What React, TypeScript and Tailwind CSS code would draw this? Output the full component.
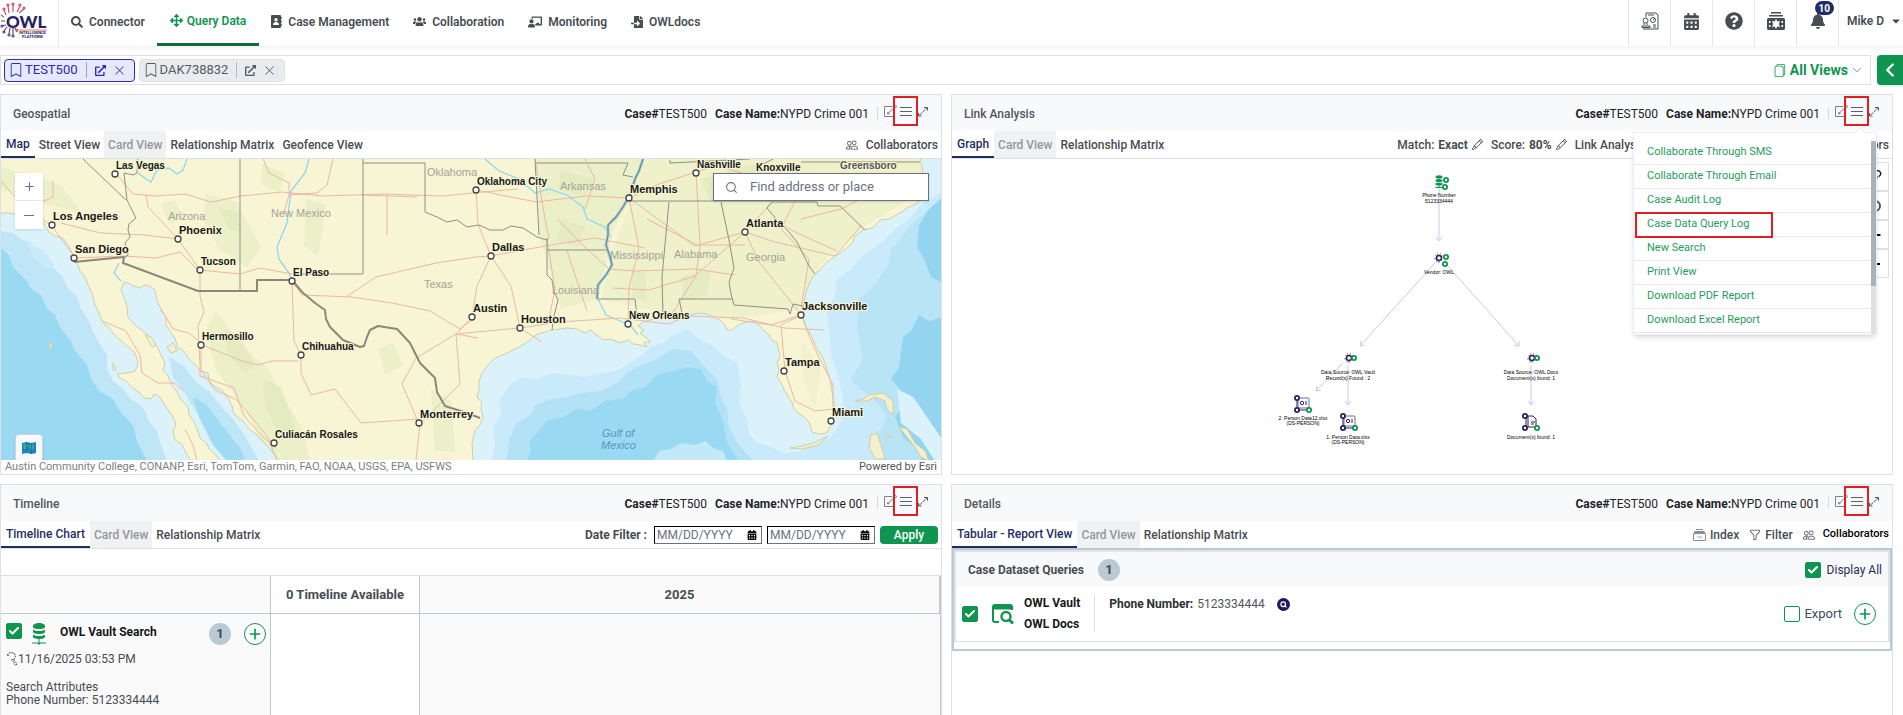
import React from 'react';
import {
  FaSearch,
  FaArrowsAlt,
  FaUsers,
  FaChalkboardTeacher,
  FaFileImport,
  FaCalendarAlt,
  FaQuestionCircle,
  FaBell,
  FaCaretDown,
  FaExternalLinkAlt,
} from 'react-icons/fa';
import { BsBookmark, BsFiles, BsChevronDown, BsPencil, BsPeople, BsFunnel, BsLink45Deg, BsXLg } from 'react-icons/bs';
import { ChevronLeft, Check, Plus, Search } from 'lucide-react';

/* ---------- small icons ---------- */

const Logo = () => (
  <svg width="52" height="38" viewBox="0 0 52 38" role="img" aria-label="OWL Intelligence Platform">
    <g fill="none" stroke="#c9506b" strokeWidth="1.200">
      <path d="M6 13L4 8M9 11L8 4M13 10V3M17 10l3-6M19 11l5-4M4 15l-3-2" />
      <circle cx="4" cy="7" r="1" />
      <circle cx="8" cy="3" r="1" />
      <circle cx="13" cy="2" r="1" />
      <circle cx="20" cy="3" r="1" />
      <circle cx="24" cy="6" r="1" />
    </g>
    <g fill="none" stroke="#5d4585" strokeWidth="1.200">
      <path d="M5 19H1M6 23l-4 1M7 25l-3 4M10 26l-1 6M13 26v7M15 26l2 4" />
      <circle cx="2" cy="24" r="1" />
      <circle cx="4" cy="30" r="1" />
      <circle cx="9" cy="33" r="1" />
      <circle cx="13" cy="34" r="1" />
      <circle cx="17" cy="28" r="1" stroke="#e0574f" />
      <path d="M19 28h28" stroke="#e0574f" strokeWidth=".8" />
    </g>
    <text x="6" y="26" fontSize="17" fontWeight="900" fill="#262262" fontFamily="Lato, sans-serif">OWL</text>
    <text x="19" y="32" fontSize="4" fontWeight="700" fill="#262262" fontFamily="Roboto, sans-serif">INTELLIGENCE</text>
    <text x="22" y="36" fontSize="4" fontWeight="700" fill="#262262" fontFamily="Roboto, sans-serif">PLATFORM</text>
  </svg>
);

const ContactBook = () => (
  <svg width="11" height="13" viewBox="0 0 11 13" fill="currentColor">
    <path fillRule="evenodd" d="M1 0h8a1 1 0 0 1 1 1v11a1 1 0 0 1-1 1H1a1 1 0 0 1-1-1V1a1 1 0 0 1 1-1zm4 3a1.700 1.700 0 1 0 0 3.400A1.700 1.700 0 0 0 5 3zM2 10h6c0-2-1.200-3-3-3s-3 1-3 3z" />
    <path d="M10.300 2h.7v2h-.7zM10.300 5.500h.7v2h-.7zM10.300 9h.7v2h-.7z" />
  </svg>
);

const Report = () => (
  <svg width="18" height="18" viewBox="0 0 18 18" fill="none" stroke="currentColor" strokeWidth="1">
    <path d="M5 5V1h10l2 2v14H9M7 3h6M12 13h3M12 15h3" />
    <circle cx="4.500" cy="8.500" r="2.500" />
    <circle cx="12" cy="8" r="2.500" />
    <path d="M12 8l2-2M3 11v2M6 11v2M1 14h8v1.500H1zM2 17h7" />
  </svg>
);

const Vault = () => (
  <svg width="18" height="18" viewBox="0 0 18 18" fill="currentColor">
    <path d="M4 0h10v1.500H4zM2 3h14v1.500H2z" />
    <path fillRule="evenodd" d="M1.500 6h15A1.500 1.500 0 0 1 18 7.500v9a1.500 1.500 0 0 1-1.500 1.500h-15A1.500 1.500 0 0 1 0 16.500v-9A1.500 1.500 0 0 1 1.500 6zM9 7L7.500 9.500 5 9l1.200 3L5 15l2.700-.4L9 17l1.300-2.400L13 15l-1.200-3L13 9l-2.500.5zM2 9v2h1.500V9zm0 4v2h1.500v-2zm12.500-4v2H16V9zm0 4v2H16v-2z" />
  </svg>
);

const Database = () => (
  <svg width="14" height="22" viewBox="0 0 14 22" fill="#0f954f">
    <path d="M1 3c0-1.600 2.700-3 6-3s6 1.400 6 3v1.200C13 5 10.300 6 7 6S1 5 1 4.200z" />
    <path d="M1 6.500C2.500 7.500 4.600 8 7 8s4.500-.5 6-1.500V9c0 1-2.700 2-6 2S1 10 1 9z" />
    <path d="M1 11.500C2.500 12.500 4.600 13 7 13s4.500-.5 6-1.500V14c0 1-2.700 2-6 2s-6-1-6-2z" />
    <path d="M6.500 16h1v3.500H14v1H8.500L7 22l-1.500-1.500H0v-1h6.500z" />
  </svg>
);

const EditBox = () => (
  <svg width="13" height="12" viewBox="0 0 13 12" fill="none" stroke="#7b828a" strokeWidth="1">
    <path d="M8 1.500H.5v10h10V5M3.500 9L11 1.500M3.500 9l.5-2M3.500 9l2-.4" />
    <circle cx="11.500" cy="1.500" r="1" />
  </svg>
);

const Expand = () => (
  <svg width="10" height="11" viewBox="0 0 10 11" fill="none" stroke="#4b5563" strokeWidth="1">
    <path d="M6 1.500h3.500V5M9.500 1.500L.5 10M.5 7v3h3" strokeDasharray="3 .6" />
  </svg>
);

const Burger = () => (
  <svg width="12" height="11" viewBox="0 0 12 11" stroke="#5b6168" strokeWidth="1">
    <path d="M0 1.500h12M0 5.500h12M0 9.500h12" />
  </svg>
);

const MapTile = () => (
  <svg width="14" height="12" viewBox="0 0 14 12">
    <path d="M0 1l4.500-1 5 1L14 0v11l-4.500 1-5-1L0 12z" fill="#1d7fd1" />
    <path d="M1 2l3-.5 2 2-1 3-3 1zM7 5l2-3 3 1-1 5-2 1zM3 9l2-1 1 2-2 .5z" fill="#3bb273" />
    <path d="M4.500 0v11M9.500 1v11" stroke="#1463a8" strokeWidth=".7" />
  </svg>
);

const BrowserSearch = () => (
  <svg width="22" height="20" viewBox="0 0 22 20" fill="none" stroke="#0f954f" strokeWidth="2">
    <path d="M7 18H3a2 2 0 0 1-2-2V3a2 2 0 0 1 2-2h15a2 2 0 0 1 2 2v3" />
    <path d="M1 3.500h19" strokeWidth="4" />
    <circle cx="14" cy="12.500" r="4.500" strokeWidth="2.400" />
    <path d="M17.500 16l3.500 3.500" strokeWidth="2.800" />
  </svg>
);

const Drawer = () => (
  <svg width="13" height="12" viewBox="0 0 13 12" fill="none" stroke="#8b9096">
    <path d="M3 .5h7M2 2.500h9" strokeWidth="1" />
    <path d="M.5 4.500h12v7H.5z" />
    <path d="M1 3.500h11" strokeWidth="2" />
    <path d="M4.500 7.500c.5 1 3.500 1 4 0" />
  </svg>
);

const Wrench = () => (
  <svg width="12" height="14" viewBox="0 0 12 14" fill="none" stroke="#555" strokeWidth="1">
    <path d="M1 3l3-2.500L8 1l1.500 3L8 7.500 5 8M1 3l2 .5M7.500 7.500L11 12l-1.500 1.500-3-5" strokeDasharray="2 .7" />
  </svg>
);

/* ---------- form bits ---------- */

type TickProps = { id: string; label?: string; checked?: boolean };

const Tick = ({ id, label, checked = true }: TickProps) => (
  <span className="relative flex h-4 w-4 shrink-0">
    <input
      id={id}
      type="checkbox"
      aria-label={label}
      defaultChecked={checked}
      className="peer h-4 w-4 appearance-none rounded-xs border border-[#0f954f] bg-white checked:bg-[#0f954f]"
    />
    <Check
      size={12}
      strokeWidth={4}
      className="pointer-events-none absolute left-0.5 top-0.5 hidden text-white peer-checked:block"
    />
  </span>
);

const AddButton = ({ label }: { label: string }) => (
  <button
    aria-label={label}
    className="flex h-[22px] w-[22px] items-center justify-center rounded-full border border-[#0f954f] bg-white text-[#0f954f]"
  >
    <Plus size={16} strokeWidth={2.5} />
  </button>
);

const CountBadge = ({ value }: { value: number }) => (
  <span className="flex h-[22px] w-[22px] items-center justify-center rounded-full bg-[#b9cad5] text-[13px] font-bold text-[#3f474e]">
    {value}
  </span>
);

/* ---------- header ---------- */

const navItems = [
  { label: 'Connector', icon: <FaSearch size={12} /> },
  { label: 'Query Data', icon: <FaArrowsAlt size={13} />, active: true },
  { label: 'Case Management', icon: <ContactBook /> },
  { label: 'Collaboration', icon: <FaUsers size={13} /> },
  { label: 'Monitoring', icon: <FaChalkboardTeacher size={14} /> },
  { label: 'OWLdocs', icon: <FaFileImport size={12} /> },
];

const tools = [
  { label: 'Reports', icon: <Report /> },
  { label: 'Calendar', icon: <FaCalendarAlt size={17} /> },
  { label: 'Help', icon: <FaQuestionCircle size={18} /> },
  { label: 'Vault', icon: <Vault /> },
];

function Header() {
  return (
    <header className="flex h-[46px] shrink-0 items-stretch bg-white text-[#474d53] shadow-[0_2px_5px_rgba(0,0,0,0.06)]">
      <a href="#home" className="flex w-[59px] items-center border-r border-[#e6e8ec] pb-1">
        <Logo />
      </a>
      <nav className="flex">
        {navItems.map((item) => (
          <a
            key={item.label}
            href={`#${item.label}`}
            className={
              item.active
                ? 'flex items-center gap-1 border-b-3 border-[#0b6e3c] px-[13px] pb-0.5 text-xs font-semibold text-[#0f954f]'
                : 'flex items-center gap-1.5 border-b-3 border-transparent px-3 text-xs font-semibold'
            }
          >
            {item.icon}
            {item.label}
          </a>
        ))}
      </nav>
      <div className="ml-auto flex">
        {tools.map((tool) => (
          <button key={tool.label} aria-label={tool.label} className="flex w-[42px] items-center justify-center border-l border-[#e6e8ec] pb-1">
            {tool.icon}
          </button>
        ))}
        <button aria-label="Notifications" className="relative flex w-[42px] items-center justify-center border-l border-[#e6e8ec] pb-1">
          <FaBell size={16} />
          <span className="absolute right-1 top-px flex h-[14px] items-center rounded-full bg-[#1f2d66] px-1 text-[10px] font-bold text-white">
            10
          </span>
        </button>
        <button className="flex w-[65px] items-center gap-1.5 border-l border-[#e6e8ec] pb-1 pl-2 text-xs font-semibold">
          Mike D <FaCaretDown size={12} />
        </button>
      </div>
    </header>
  );
}

const caseTabs = [
  { id: 'TEST500', style: 'border-[#2a2ab8] bg-[#e6e8fb] text-[#2a2ab8]', rule: 'border-[#9a9ce0]' },
  { id: 'DAK738832', style: 'border-[#dfe3e7] bg-[#e9ecef] text-[#555b61]', rule: 'border-[#b5babf]' },
];

function CaseBar() {
  return (
    <div className="mt-[9px] flex shrink-0 gap-1.5">
      <div className="flex h-[30px] flex-1 items-center gap-1 border border-[#dde1e7] bg-white pl-[3px] pr-2">
        {caseTabs.map((tab) => (
          <div key={tab.id} className={`flex h-[23px] items-center rounded-sm border px-1 pr-[9px] text-[13px] ${tab.style}`}>
            <BsBookmark size={14} />
            <button className="pl-0.5 pr-2">{tab.id}</button>
            <span className={`h-4 border-l ${tab.rule}`} />
            <button aria-label={`Open ${tab.id}`} className="px-2">
              <FaExternalLinkAlt size={11} />
            </button>
            <button aria-label={`Close ${tab.id}`}>
              <BsXLg size={11} />
            </button>
          </div>
        ))}
        <button className="ml-auto flex items-center gap-1 text-sm font-bold text-[#0f954f]">
          <BsFiles size={13} />
          All Views
          <BsChevronDown size={10} />
        </button>
      </div>
      <button aria-label="Open side panel" className="flex w-[26px] items-center justify-center rounded-l bg-[#0f954f] text-white shadow">
        <ChevronLeft size={22} strokeWidth={2.5} />
      </button>
    </div>
  );
}

/* ---------- panel chrome ---------- */

type PanelProps = {
  title: string;
  tabs: string[];
  actions: React.ReactNode;
  menu?: React.ReactNode;
  children: React.ReactNode;
};

function Panel({ title, tabs, actions, menu, children }: PanelProps) {
  return (
    <section className="flex min-w-0 flex-col border border-[#dde1e7] bg-white">
      <div className="flex h-9 shrink-0 items-center bg-[#f8f9fb] pl-3 pr-[13px] text-xs text-[#1f2327]">
        <h2 className="pt-px font-medium text-[#50565c]">{title}</h2>
        <p className="ml-auto pt-px">
          <b>Case#</b>TEST500
        </p>
        <p className="ml-2 pt-px">
          <b>Case Name:</b>NYPD Crime 001
        </p>
        <span className="ml-2 h-3 border-l border-[#d5d9de]" />
        <div className="relative ml-1.5 flex items-center pb-1">
          <button aria-label={`Edit ${title}`} className="-mr-1">
            <EditBox />
          </button>
          <button
            aria-label={`${title} menu`}
            className="relative -my-2 flex h-[30px] w-[25px] items-center justify-center border-2 border-[#e41e20]"
          >
            <Burger />
          </button>
          <button aria-label={`Expand ${title}`}>
            <Expand />
          </button>
          {menu}
        </div>
      </div>
      <div className="flex h-7 shrink-0 items-stretch border-b border-[#dde1e7] pr-[3px] text-xs font-medium text-[#474d53]">
        <div role="tablist" className="flex">
          {tabs.map((tab, i) => (
            <button
              key={tab}
              role="tab"
              className={
                i === 0
                  ? 'border-b-2 border-[#1f2d66] px-[5px] text-[#1f2d66]'
                  : tab === 'Card View'
                    ? 'bg-[#f0f1f3] px-1 text-[#94989c]'
                    : 'px-1'
              }
            >
              {tab}
            </button>
          ))}
        </div>
        <div className="ml-auto flex items-center">{actions}</div>
      </div>
      {children}
    </section>
  );
}

/* ---------- geospatial ---------- */

const cities: [string, number, number, number][] = [
  ['Las Vegas', 114, 15, 10],
  ['Los Angeles', 51, 66, 11],
  ['San Diego', 73, 99, 11],
  ['Phoenix', 177, 80, 11],
  ['Tucson', 199, 111, 10],
  ['El Paso', 291, 122, 10],
  ['Hermosillo', 200, 186, 10],
  ['Chihuahua', 300, 196, 10],
  ['Monterrey', 418, 264, 11],
  ['Culiacán Rosales', 273, 284, 10],
  ['Oklahoma City', 475, 31, 10],
  ['Dallas', 490, 97, 11],
  ['Austin', 471, 158, 11],
  ['Houston', 519, 169, 11],
  ['New Orleans', 627, 165, 10],
  ['Memphis', 628, 39, 11],
  ['Nashville', 695, 14, 10],
  ['Atlanta', 744, 73, 11],
  ['Jacksonville', 800, 156, 11],
  ['Tampa', 783, 212, 11],
  ['Miami', 830, 262, 11],
];

const states: [string, number, number][] = [
  ['Arizona', 167, 61],
  ['New Mexico', 270, 58],
  ['Texas', 423, 129],
  ['Oklahoma', 426, 17],
  ['Arkansas', 559, 31],
  ['Mississippi', 609, 100],
  ['Alabama', 673, 99],
  ['Georgia', 745, 102],
  ['Louisiana', 551, 135],
];

const pacific =
  'M-2 54L8 54 16 56 30 60 42 63 47 72 54 77 62 79 68 88 72 96 76 104 79 112 84 118 87 126 91 134 94 146 99 156 101 163 107 168 112 174 118 180 127 188 133 193 136 199 137 206 134 212 126 214 116 215 119 219 126 223 132 229 139 234 143 239 150 240 153 235 159 238 163 245 168 252 172 258 175 266 172 272 174 281 181 285 184 292 190 302H-2z';
const cortez =
  'M120 131L123 123 127 124 133 127 139 129 143 126 148 127 154 131 155 138 158 146 161 153 165 158 165 166 169 172 174 180 177 189 183 192 187 199 194 205 199 212 207 214 208 222 214 228 221 231 227 239 231 247 233 255 242 262 248 270 256 276 263 284 270 291 278 302H219L215 296 208 290 206 285 199 279 196 270 193 263 188 256 187 248 180 241 176 233 171 226 167 217 162 211 164 204 159 194 156 187 149 182 147 176 139 170 131 163 127 158 126 148 124 141z';
const gulf =
  'M472 302L471 284 474 271 479 266 482 258 480 250 481 244 476 238 478 231 478 222 481 214 487 206 494 199 502 196 512 191 520 187 529 181 535 176 541 174 551 171 566 169 576 170 584 174 589 171 596 176 602 181 610 180 619 184 627 181 632 185 640 186 646 188 643 183 650 183 644 178 639 174 643 171 637 167 642 163 656 159 669 156 677 158 682 156 690 156 699 154 706 155 712 158 719 161 724 166 726 171 731 171 736 167 742 164 752 162 758 166 762 171 767 175 771 181 776 184 777 188 779 197 776 204 778 211 776 218 780 224 783 231 788 239 791 243 793 250 797 254 803 258 808 263 811 273 818 275 826 274 831 264 833 254 833 244 831 232 829 221 825 208 822 199 816 190 811 178 805 168 802 158 802 147 804 138 806 130 809 123 812 117 817 113 825 104 836 96 845 90 851 84 854 77 862 71 872 69 879 61 888 60 899 54 908 48 916 44 923 38 927 31 924 24 922 14 919 -2H942V302z';

function UsMap() {
  return (
    <svg className="block h-full w-full" viewBox="0 0 940 301" preserveAspectRatio="xMidYMid slice" role="img" aria-label="Map of the southern United States">
      <rect width="940" height="301" fill="#f7f5d3" />
      {/* relief */}
      <g fill="#e9efc5" opacity=".75">
        <path d="M535 0H640L630 40 612 70 604 110 596 140 560 150 548 110 538 76z" />
        <path d="M640 0H918L924 30 862 68 820 105 800 150 730 160 664 154 600 140 612 90 632 40z" opacity=".8" />
        <path d="M205 35l30 8 25 45-14 20-28-18-16-30zM305 40l20 6-8 52-14-12zM160 45l14-4 8 18-14 6z" />
        <path d="M215 152l22 30 30 28 34 60 8 31h-40l-24-50-30-40-10-40z" />
        <path d="M378 190l14-6 10 22-18 10zM262 5l22 10-6 18-18-8zM740 180l30 6 8 20-14-10z" />
        <path d="M0 8l60 18 20 28-40-10-40-14zM430 230l20 12 4 50h-20z" />
        <path d="M800 180l20 30-6 40-12-30z" opacity=".5" />
      </g>
      <g fill="#dfe8ba" opacity=".55">
        <path d="M224 170l14 6 16 30-10 8-18-22zM262 220l18 8 14 40-14 10-16-30zM218 48l18 6 6 20-14-4zM560 12l34 8-10 18-26-8zM700 20l50-14 24 6-30 24-34 8z" />
        <path d="M560 60l24 8-6 20-22-6zM630 110l14 4 2 30-14-6zM680 118l30-8-4 26-24 6z" />
      </g>
      {/* water, shallow to deep */}
      <g strokeLinejoin="round">
        <path d={pacific} fill="#dcf2fb" stroke="#cfcfa4" />
        <path d="M-2 72L12 74 20 80 30 84 38 94 46 98 52 108 62 118 66 128 76 138 80 150 88 162 92 172 98 184 106 196 106 210 112 222 122 230 130 240 142 248 148 262 156 272 160 286 166 302H-2z" fill="#bfe6f7" />
        <path d="M-2 88L8 96 12 108 26 122 30 130 40 136 46 150 54 156 60 170 70 182 74 192 86 206 90 220 98 232 112 240 120 254 132 266 136 282 146 302H-2z" fill="#9ad9f2" />
        <path d="M26 84l18 8 10 16-8 2-14-12z" fill="#c9eafa" />
        <path d={cortez} fill="#dcf2fb" stroke="#cfcfa4" />
        <path d="M168 198l14 8 14 18 12 8 14 18 10 10 14 20 12 22h-28l-14-18-10-20-12-12-10-18-12-16z" fill="#bfe6f7" />
        <path d="M192 238l14 8 16 22 18 22 4 12h-18l-14-16-14-28z" fill="#9fdbf3" />
        <path d={gulf} fill="#dcf2fb" stroke="#cfcfa4" />
        <path d="M491 302L494 284 492 270 500 254 499 240 508 226 522 218 536 220 552 214 570 216 584 218 600 214 614 212 626 206 638 198 650 188 662 184 672 176 686 170 698 180 710 186 722 196 736 204 740 224 738 244 746 260 748 276 758 284 770 288 784 294 800 292 828 280 836 270 840 262 842 240 838 220 830 196 828 170 826 154 834 136 836 120 850 110 860 98 880 84 894 70 910 58 920 46 942 32V302z" fill="#c9eafa" />
        <path d="M506 302L508 280 516 264 530 256 534 246 550 240 566 238 580 234 600 232 616 224 626 214 640 206 656 200 672 190 690 192 702 206 716 220 720 238 726 250 728 268 736 284 752 302z" fill="#b3e1f6" />
        <path d="M858 140L870 130 880 116 888 104 890 90 900 80 910 66 926 52 942 44V302H880L868 280 880 270 886 258 878 246 870 236 858 230 850 220 862 200 856 170z" fill="#b9e4f6" />
        <path d="M526 302L530 290 528 282 536 274 546 262 562 258 576 250 590 252 604 242 622 240 630 232 644 228 656 216 672 212 686 208 700 210 706 222 716 228 714 244 722 262 726 284 738 302z" fill="#9ad9f2" />
        <path d="M652 302l6-10 12-2 10-6 14 2 10-4 10 8 8 2 4 10z" fill="#c3e8f8" />
        <path d="M918 66l10-16 14-12v86l-12-6-6-16-8-14zM902 178l8-6 8-16 10 6 14-4v144h-20l-8-14-12-10-8-20 8-12-2-14-10-12 8-12z" fill="#93d5f1" />
        <path d="M896 230l16 8 14 20 16 24v20h-8l-14-22-20-16z" fill="#dcf2fb" />
      </g>
      <g fill="#f3f1cd" stroke="#cfcfa4">
        <path d="M144 176l6 2 5 8-4 2zM166 188l6-4 4 8-6 2zM112 204l3 6-3 2zM48 182l3 5-2 4zM854 242l8-2 6-4 14-2 10 8v14l-6-6-2-8-10-4-8 4zM870 276l6-2 4 12 4 14h-10l-6-12zM898 268l8 2 8 14 10 8 4 10-8-4-6-10-8-10zM884 278l6-1-4 3z" />
        <path d="M789 289l12-2 14-4 12-6-10 9-16 4z" />
      </g>
      {/* rivers */}
      <g fill="none" stroke="#8fd6f0" strokeWidth="1.300">
        <path d="M137 14l8 6 5 3 6-12 12-2 8 6 6-4 4-11M308 0l-4 14-14 18-4 32-10 24 2 12 10 14 5 12M118 104l-5 10 7 8" />
        <path d="M484 0l14 12 20 8 16 14 14-4 18 6 16 12 4 12 18 8 6 10M597 140l8 16 14 6 10 4 8 10" />
      </g>
      {/* roads */}
      <g fill="none" stroke="#ecb8a2" strokeWidth="1">
        <path d="M0 22l14 16 18 16 18 12 22 30M52 22v16l-22 10M114 13l18 22 22 2 30-2 26 8 30-6 40-4 42 4 60-2 60 2 40-4 35-3" />
        <path d="M60 64l40 10 44 2 33 4 22 31 40 4 20-6 32 6M73 99l50-2 32 2 24-6 20 20v24l4 16-6 14 2 38v12l34 12 10 28 18 20 14 12" />
        <path d="M291 122l10 14 50 2 40 6 38 8 30 18 16-12M291 122l2 60 7 14 0 18 10 22 24-6 26 34 58-4M345 138l30-20 60-14 40-6 15-1 54-10 50-8 50 10" />
        <path d="M490 97l-14 30-5 31-16 17 64-6 40-6 60-4 48 6 20-8 56 2 40 10 40 2" />
        <path d="M490 97l20 30 9 42 22 14M475 31l2 34 13 32M475 31l60 12 50-6 43 2 30-14 37-12 20-6 60 16M628 39l10 50-10 40-1 36M628 39l66 48 50-14M695 13l4 74-4 30-28 44M744 73l-50 44-46 14-36-2M744 73l30 10 60 14 26-30M744 73l14 30 40 50M744 73l36-40 60-14M800 156l-30 10-40-6M800 156l12 30 20 40v36M800 156l-20 10 4 46 10 30 20 10 18-2" />
        <path d="M455 175l4 50-40 40-4 36M455 175l-40 24-14 26 17 40M455 175l22 4M386 36v40M362 36l54 2M546 80l8 50-6 30M566 92l20 60M534 0l10 60 4 20M584 0l10 20-10 30" />
        <path d="M145 36l2 12 30 32M262 0l6 14 20 10v12l-6 20M332 0l-6 26-10 8-28 2M200 186l0 25 14 20 22 10 30 36 10 24M160 150l12 20 16 4 12 10" />
        <path d="M646 60l50 26 48 0M772 60l20 12 44 20M800 30l-20 40 28 30-8 50M556 60l30 30 22 20 26 2 60-2 40 6M880 30l-40 20-40 10" />
        <path d="M201 186l40 16 16 4 14-4 26 0M101 162l24 10 14 24 2 18 16 10 16 0 10 8M184 270l8 16 4 16" />
      </g>
      {/* state lines */}
      <g fill="none" stroke="#8f9088" strokeWidth="1">
        <path d="M82 0l43 41M137 0l-1 14-4 2-9-2 3 27 4 8 5 10-7 6-1 6 2 7-5 6 2 6 1 6-4 3M239 0v132M295 115h67V4h62v49l12 5 10 5 10-2 10 7 12-2 11 5 13 0 8-4 12 2 14 9 10 3M362 4V0" />
        <path d="M534 0l4 76M535 4h92l-5 12 10 2M546 79v37l5 5 2 12 4 8-4 16-2 14M546 91h60M596 140h38l2 18M628 42h143M668 43l-7 75 1 38M720 43l8 38 5 28-5 14 2 12 3 11 54 4 2 5 3-10 10 2M731 140h-53l3 14M771 43l-5 6 10 12 12 12 8 10 6 12 6 12 6 8M771 43h45l1 4h22l25 24M669 1v3l80-4M760 6l12-6M800 3h119" />
      </g>
      <path d="M642 0l-4 12-4 8-4 14-8 14-7 10-8 8 0 10-2 10 4 12 2 8-6 10-8 10-1 14" fill="none" stroke="#9fd4e6" strokeWidth="3" />
      <path d="M642 0l-4 12-4 8-4 14-8 14-7 10-8 8 0 10-2 10 4 12 2 8-6 10-8 10-1 14" fill="none" stroke="#77807f" strokeWidth="1.200" />
      <path d="M73 103l50-5-1 6 75 28h59v-11h35l10 12 13 11 10 7 1 9 4 8 13 13 17 7 4-1 3-9 3-7 8-4 19 3 13 14 10 20 15 15 2 14 8 14 22 7 13 5" fill="none" stroke="#8a8878" strokeWidth="2" strokeLinejoin="round" />
      <g fill="#a3a39b" fontFamily="'Liberation Sans', Arial, sans-serif" fontSize="11">
        {states.map(([name, x, y]) => (
          <text key={name} x={x} y={y}>{name}</text>
        ))}
      </g>
      <g fill="#5f93bd" fontFamily="'Liberation Sans', Arial, sans-serif" fontSize="11" fontStyle="italic">
        <text x="601" y="278">Gulf of</text>
        <text x="600" y="290">Mexico</text>
      </g>
      <g fontFamily="'Liberation Sans', Arial, sans-serif" fontWeight="700" fill="#16181a" stroke="#f7f5d3" strokeWidth="2" paintOrder="stroke">
        {cities.map(([name, x, y, size]) => (
          <text key={name} x={x + 1} y={y - 5} fontSize={size}>{name}</text>
        ))}
        <text x="755" y="12" fontSize="10">Knoxville</text>
        <text x="839" y="10" fontSize="10" fill="#555">Greensboro</text>
      </g>
      <g fill="#fff" stroke="#444" strokeWidth="1.300">
        {cities.map(([name, x, y]) => (
          <circle key={name} cx={x} cy={y} r="3" />
        ))}
      </g>
    </svg>
  );
}

function Geospatial() {
  return (
    <Panel
      title="Geospatial"
      tabs={['Map', 'Street View', 'Card View', 'Relationship Matrix', 'Geofence View']}
      actions={
        <button className="flex items-center gap-2">
          <BsPeople size={12} />
          Collaborators
        </button>
      }
    >
      <div className="relative h-[301px] overflow-hidden">
        <UsMap />
        <div className="absolute left-3.5 top-3.5 flex flex-col divide-y divide-gray-200 bg-white text-gray-500 shadow">
          <button aria-label="Zoom in" className="flex h-7 w-7 items-center justify-center">
            <Plus size={13} strokeWidth={2} />
          </button>
          <button aria-label="Zoom out" className="flex h-7 w-7 items-center justify-center">
            <span className="w-2.5 border-t border-gray-500" />
          </button>
        </div>
        <label className="absolute right-3 top-3.5 flex h-7 w-[216px] items-center gap-3 border border-gray-500 bg-white pl-[11px] text-gray-500 shadow-sm">
          <Search size={13} strokeWidth={2} className="shrink-0" />
          <input
            aria-label="Find address or place"
            placeholder="Find address or place"
            className="w-full text-[13px] outline-none placeholder:text-gray-500"
          />
        </label>
        <button aria-label="Basemap" className="absolute -bottom-0.5 left-3.5 flex h-7 w-7 items-center justify-center rounded border border-gray-300 bg-[#f7f9fc] shadow">
          <MapTile />
        </button>
      </div>
      <div className="flex items-center justify-between px-1 text-[11px] leading-[14px] text-[#7a7f84]">
        <span>Austin Community College, CONANP, Esri, TomTom, Garmin, FAO, NOAA, USGS, EPA, USFWS</span>
        <span className="text-[#50565c]">Powered by Esri</span>
      </div>
    </Panel>
  );
}

/* ---------- link analysis ---------- */

const menuItems = [
  'Collaborate Through SMS',
  'Collaborate Through Email',
  'Case Audit Log',
  'Case Data Query Log',
  'New Search',
  'Print View',
  'Download PDF Report',
  'Download Excel Report',
];

function ActionMenu() {
  return (
    <div className="absolute right-0.5 top-7 z-10 flex h-[203px] w-[244px] border border-[#eceef1] bg-white pt-2 shadow-md">
      <span className="absolute -top-1 right-3 h-2 w-2 rotate-45 border-l border-t border-[#eceef1] bg-white" />
      <ul className="relative flex-1 overflow-hidden bg-white">
        {menuItems.map((item) => (
          <li key={item} className="flex h-6 items-center border-b border-[#e5e7ea]">
            <button
              className={
                item === 'Case Data Query Log'
                  ? 'ml-px h-[26px] w-[138px] shrink-0 border-2 border-[#e41e20] pl-2.5 text-left text-[11px] text-[#1f9d5c]'
                  : 'pl-[13px] text-[11px] text-[#1f9d5c]'
              }
            >
              {item}
            </button>
          </li>
        ))}
      </ul>
      <div className="w-[5px] bg-[#dfe1e4]">
        <div className="h-[145px] bg-[#a9b2ba]" />
      </div>
    </div>
  );
}

const Badge = ({ x, y, color = '#0f954f' }: { x: number; y: number; color?: string }) => (
  <g>
    <circle cx={x} cy={y} r="3" fill={color} />
    <circle cx={x} cy={y} r="1.200" fill="#fff" />
  </g>
);

const Burst = ({ x, y }: { x: number; y: number }) => (
  <g fill="none">
    <path d={`M${x} ${y}l-4-3M${x} ${y}l-2-6M${x} ${y}l2-6M${x} ${y}l5-3`} stroke="#dc7f8b" strokeDasharray="2 1" />
    <path d={`M${x} ${y}l-5 1M${x} ${y}l-3 5M${x} ${y}v6`} stroke="#7a6a9c" strokeDasharray="2 1" />
    <circle cx={x} cy={y} r="2.500" stroke="#262262" strokeWidth="1.600" fill="#fff" />
  </g>
);

const labels: [number, number, string][] = [
  [487, 38, 'Phone Number'],
  [487, 44, '5123334444'],
  [487, 115, 'Vendor: OWL'],
  [396, 215, 'Data Source: OWL Vault'],
  [396, 221, 'Record(s) Found : 2'],
  [579, 215, 'Data Source: OWL Docs'],
  [579, 221, 'Document(s) found: 1'],
  [351, 261, '2. Person Data12.xlsx'],
  [351, 266, '(DS-PERSON)'],
  [396, 280, '1. Person Data.xlsx'],
  [396, 285, '(DS-PERSON)'],
  [579, 280, 'Document(s) found: 1'],
];

function LinkGraph() {
  return (
    <svg className="block h-full w-full" viewBox="0 0 940 314" preserveAspectRatio="xMidYMin" role="img" aria-label="Link graph">
      <g stroke="#cbc8e8" strokeWidth="1" fill="none">
        <path d="M487 29v52M484 78l3 4 3-4M483 104l-75 83M409 182l-1 5 5-1M495 106l72 81M562 186l5 1v-5" />
        <path d="M391 204l-27 28M365 227l-1 5 5-1M396 206v40M393 242l3 4 3-4M579 206v40M576 242l3 4 3-4" />
      </g>
      <g fill="#0f954f">
        <ellipse cx="487" cy="18" rx="3.500" ry="1.700" />
        <ellipse cx="487" cy="21.500" rx="3.500" ry="1.500" />
        <ellipse cx="487" cy="25" rx="3.500" ry="1.500" />
        <path d="M486.500 26h1v2h3v1h-7v-1h3z" />
      </g>
      <Badge x={494} y={21} />
      <Badge x={493} y={28} />
      <Burst x={487} y={99} />
      <Badge x={494} y={98} />
      <Badge x={493} y={105} />
      <Burst x={397} y={199} />
      <Badge x={402} y={199} />
      <Burst x={580} y={199} />
      <Badge x={585} y={199} />
      {[[350, 245], [396, 263]].map(([x, y]) => (
        <g key={x}>
          <rect x={x - 4} y={y - 6} width="11" height="10" rx="1" fill="#fff" stroke="#6d68a8" />
          <circle cx={x} cy={y - 1} r="1.700" fill="none" stroke="#262262" />
          <path d={`M${x + 4} ${y - 3}v4M${x - 5} ${y - 4}v8M${x - 3} ${y + 6}h8`} stroke="#262262" />
          <Badge x={x - 5} y={y - 6} color="#262262" />
          <Badge x={x - 5} y={y + 6} color="#262262" />
          <Badge x={x + 7} y={y + 6} />
        </g>
      ))}
      <path d="M574 257v12M576 257h5l3 3v8h-8zM579 263h4M579 265h3" fill="none" stroke="#262262" />
      <Badge x={573} y={257} color="#262262" />
      <Badge x={573} y={269} color="#262262" />
      <Badge x={585} y={269} />
      <g fill="#000" fontFamily="'Liberation Sans', Arial, sans-serif" fontSize="5" textAnchor="middle">
        {labels.map(([x, y, text]) => (
          <text key={`${x}-${y}`} x={x} y={y}>{text}</text>
        ))}
      </g>
    </svg>
  );
}

const graphTools = [
  { label: 'Link nodes', icon: <BsLink45Deg size={18} /> },
  { label: 'Recenter', icon: <span className="h-3 w-3 rounded-full border-2 border-[#555]" /> },
  { label: 'Zoom in graph', icon: <Plus size={16} strokeWidth={3} /> },
  { label: 'Zoom out graph', icon: <span className="w-2.5 border-t-2 border-black" /> },
];

function LinkAnalysis() {
  return (
    <Panel
      title="Link Analysis"
      tabs={['Graph', 'Card View', 'Relationship Matrix']}
      menu={<ActionMenu />}
      actions={
        <div className="flex items-center gap-2">
          <button className="flex items-center gap-1">
            Match: <b>Exact</b> <BsPencil size={11} />
          </button>
          <button className="flex items-center gap-1">
            Score: <b>80%</b> <BsPencil size={11} />
          </button>
          <span className="w-[214px]">Link Analysis</span>
          <button className="flex items-center gap-2">
            <BsPeople size={12} />
            Collaborators
          </button>
        </div>
      }
    >
      <div className="relative min-h-0 flex-1">
        <LinkGraph />
        <div className="absolute right-[3px] top-[3px] flex flex-col">
          {graphTools.map((tool) => (
            <button key={tool.label} aria-label={tool.label} className="flex h-[29px] w-7 items-center justify-center border border-[#dde1e7] bg-white text-black">
              {tool.icon}
            </button>
          ))}
        </div>
      </div>
    </Panel>
  );
}

/* ---------- timeline ---------- */

const DateBox = ({ label }: { label: string }) => (
  <span className="flex h-[18px] w-[108px] items-center border border-b-gray-500 border-l-black border-r-gray-500 border-t-black bg-white pl-0.5 pr-1">
    <input aria-label={label} placeholder="MM/DD/YYYY" className="w-full min-w-0 text-xs font-normal outline-none placeholder:text-gray-500" />
    <FaCalendarAlt size={10} className="shrink-0 text-black" />
  </span>
);

function Timeline() {
  return (
    <Panel
      title="Timeline"
      tabs={['Timeline Chart', 'Card View', 'Relationship Matrix']}
      actions={
        <div className="flex items-center gap-[5px]">
          <b className="mr-0.5">Date Filter :</b>
          <DateBox label="From date" />
          <DateBox label="To date" />
          <button className="h-[18px] w-[58px] rounded bg-[#0f954f] text-xs font-medium text-white">Apply</button>
        </div>
      }
    >
      <div className="mt-[26px] flex min-h-0 flex-1 border-t border-[#dde1e7] bg-[#fafafa] text-[#474d53]">
        <div className="flex w-[270px] flex-col border-r border-[#b9cad5]">
          <div className="h-[38px] border-b border-[#b9cad5]" />
          <div className="flex items-start px-1 pl-[5px] pt-[9px]">
            <Tick id="vault-search" />
            <span className="ml-2.5">
              <Database />
            </span>
            <label htmlFor="vault-search" className="ml-3.5 text-xs font-bold leading-[18px] text-[#16181a]">
              OWL Vault Search
            </label>
            <span className="ml-auto mr-[13px]">
              <CountBadge value={1} />
            </span>
            <AddButton label="Add vault search" />
          </div>
          <p className="mt-1.5 flex items-center px-[5px] text-xs">
            <Wrench />
            11/16/2025 03:53 PM
          </p>
          <p className="mt-3.5 px-[5px] text-xs leading-[13px]">
            Search Attributes
            <br />
            Phone Number: 5123334444
          </p>
        </div>
        <div className="w-[149px] border-r border-[#b9cad5] bg-white">
          <div className="flex h-[38px] items-center justify-center border-b border-[#b9cad5] text-[13px] font-bold">
            0 Timeline Available
          </div>
        </div>
        <div className="flex-1 border-r border-[#c5cbd1]">
          <div className="flex h-[38px] items-center justify-center border-b border-r border-[#b9cad5] text-[13px] font-bold">
            2025
          </div>
        </div>
      </div>
    </Panel>
  );
}

/* ---------- details ---------- */

function Details() {
  return (
    <Panel
      title="Details"
      tabs={['Tabular - Report View', 'Card View', 'Relationship Matrix']}
      actions={
        <div className="flex items-center gap-2.5">
          <button className="flex items-center gap-1">
            <Drawer /> Index
          </button>
          <button className="flex items-center gap-1">
            <BsFunnel size={12} /> Filter
          </button>
          <button className="flex items-center gap-2 text-black">
            <BsPeople size={12} className="text-[#474d53]" />
            <span className="text-[11px]">Collaborators</span>
          </button>
        </div>
      }
    >
      <div className="-mt-px border-2 border-[#b9cad5] pb-[7px] text-xs">
        <div className="border-2 border-b border-[#dfe2e8]">
          <div className="flex h-[35px] items-center bg-[#f8f9fb] pl-3 pr-1.5">
            <h3 className="mr-3.5 font-bold text-[#474d53]">Case Dataset Queries</h3>
            <CountBadge value={1} />
            <span className="ml-auto flex items-center gap-1.5 text-[#1f2d55]">
              <Tick id="display-all" />
              <label htmlFor="display-all">Display All</label>
            </span>
          </div>
          <div className="flex h-[54px] items-center pl-1.5 pr-3">
            <Tick id="vault-docs" label="Select OWL Vault and OWL Docs" />
            <span className="ml-3.5">
              <BrowserSearch />
            </span>
            <p className="ml-2.5 font-bold leading-[21px] text-[#16181a]">
              OWL Vault
              <br />
              OWL Docs
            </p>
            <div className="ml-3.5 flex h-[38px] items-start gap-1 border-l border-[#dde1e7] pl-3.5 pt-px text-[#50565c]">
              <b className="text-[#2b3035]">Phone Number:</b>
              <span>5123334444</span>
              <button aria-label="Search number" className="ml-2 mt-0.5 flex h-[13px] w-[13px] items-center justify-center rounded-full bg-[#1f1a5e] text-white">
                <Search size={7} strokeWidth={4} />
              </button>
            </div>
            <span className="ml-auto mr-3 flex items-center gap-1 text-[13px] text-[#3c4a6b]">
              <Tick id="export" checked={false} />
              <label htmlFor="export">Export</label>
            </span>
            <AddButton label="Add query" />
          </div>
        </div>
      </div>
    </Panel>
  );
}

export default function App() {
  return (
    <div className="flex h-screen flex-col overflow-hidden bg-white font-['Roboto',sans-serif]">
      <Header />
      <CaseBar />
      <main className="-mb-px mt-[9px] grid min-h-0 flex-1 grid-cols-2 grid-rows-[auto_1fr] gap-[9px] pr-2.5">
        <Geospatial />
        <LinkAnalysis />
        <Timeline />
        <Details />
      </main>
    </div>
  );
}
